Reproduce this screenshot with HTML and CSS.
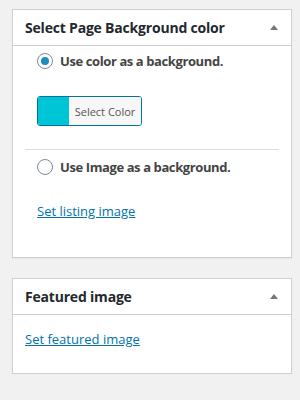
FILE: index.html
```html
<!DOCTYPE html>
<html>
<head>
<meta charset="utf-8">
<link rel="stylesheet" href="styles.css">
</head>
<body>
<div class="wrap">
  <div class="postbox">
    <div class="hndle">
      <h2>Select Page Background color</h2>
      <span class="toggle"></span>
    </div>
    <div class="inside first">
      <label class="opt"><span class="radio checked"></span><span>Use color as a background.</span></label>
      <div class="picker">
        <span class="swatch"></span><span class="pick-label">Select Color</span>
      </div>
      <hr class="sep">
      <label class="opt"><span class="radio"></span><span>Use Image as a background.</span></label>
      <a class="link indent" href="#">Set listing image</a>
    </div>
  </div>
  <div class="postbox second">
    <div class="hndle">
      <h2>Featured image</h2>
      <span class="toggle"></span>
    </div>
    <div class="inside">
      <a class="link" href="#">Set featured image</a>
    </div>
  </div>
</div>
</body>
</html>
```
FILE: styles.css
```css
html, body {
  margin: 0;
  padding: 0;
  background: #f1f1f1;
  font-family: "Open Sans", "Noto Sans", sans-serif;
  color: #23282d;
}
.wrap {
  padding: 9px 8px 0 12px;
}
.postbox {
  background: #fff;
  border: 1px solid #ccd0d4;
  box-shadow: 0 1px 1px rgba(0,0,0,0.04);
  width: 278px;
}
.postbox.second {
  margin-top: 20px;
}
.hndle {
  display: flex;
  align-items: center;
  justify-content: space-between;
  height: 35px;
  border-bottom: 1px solid #ccd0d4;
  padding: 0 12px 0 12px;
}
.hndle h2 {
  margin: 0;
  font-size: 14px;
  font-weight: 700;
  letter-spacing: -0.2px;
  color: #23282d;
}
.toggle {
  width: 0;
  height: 0;
  border-left: 4px solid transparent;
  border-right: 4px solid transparent;
  border-bottom: 5px solid #72777c;
  margin-right: 1px;
}
.inside {
  padding: 15px 12px 0 12px;
  height: 43px;
}
.inside.first {
  padding: 6px 12px 0 12px;
  height: 205px;
}
.opt {
  display: flex;
  align-items: center;
  gap: 7px;
  padding-left: 12px;
  font-size: 13px;
  font-weight: 700;
  color: #444;
  height: 18px;
  letter-spacing: -0.4px;
}
.radio {
  box-sizing: border-box;
  width: 16px;
  height: 16px;
  border: 1px solid #7e8993;
  border-radius: 50%;
  display: flex;
  align-items: center;
  justify-content: center;
  flex-shrink: 0;
}
.radio.checked::after {
  content: "";
  width: 8px;
  height: 8px;
  border-radius: 50%;
  background: #1e8cbe;
}
.picker {
  display: flex;
  margin: 26px 0 0 12px;
  width: 105px;
  height: 30px;
  box-sizing: border-box;
  border: 1px solid #0071a1;
  border-radius: 3px;
  overflow: hidden;
}
.swatch {
  width: 31px;
  background: #00c5d6;
}
.pick-label {
  flex: 1;
  background: #f7f7f7;
  font-size: 11px;
  color: #555;
  display: flex;
  align-items: center;
  justify-content: center;
}
.sep {
  border: 0;
  border-top: 1px solid #ddd;
  margin: 23px 0 8px 0;
}
.link {
  display: block;
  font-size: 13px;
  color: #0073aa;
  text-decoration: underline;
  line-height: 18px;
}
.link.indent {
  margin: 26px 0 0 12px;
}
```
